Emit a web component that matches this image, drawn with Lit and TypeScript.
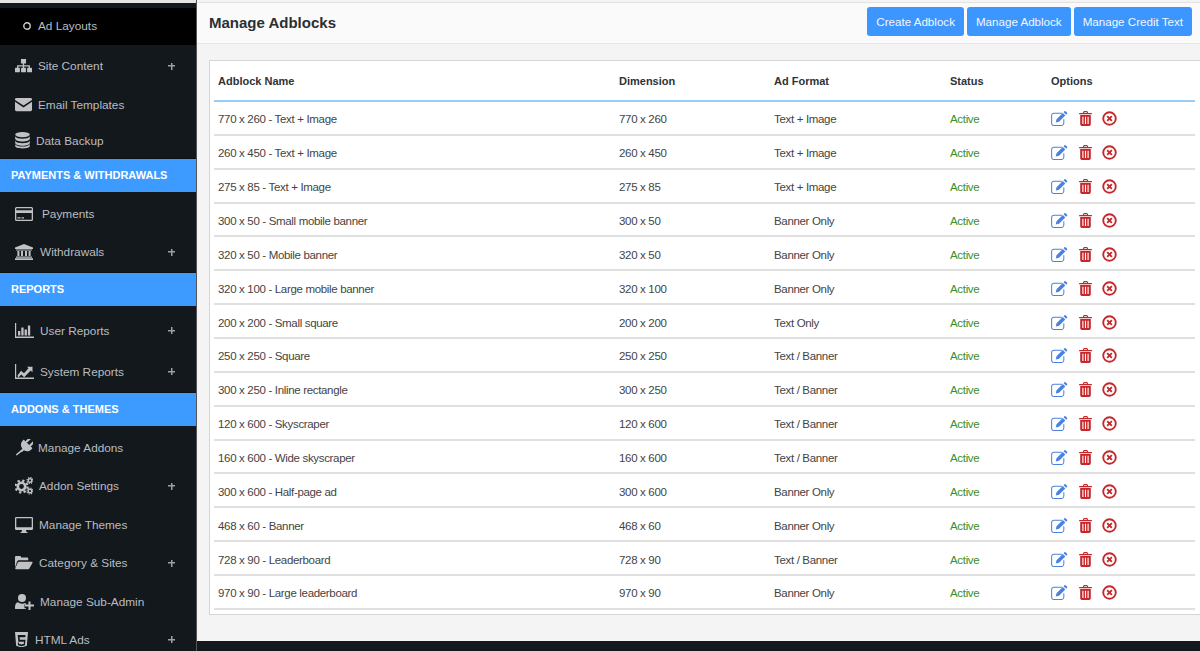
import { LitElement, html, css, svg } from 'lit';
import { customElement } from 'lit/decorators.js';

const icons: Record<string, any> = {
  sitemap: svg`<path d="M6.300 0h5.400v4.800H6.300zM8.300 4.800h1.400v1.700H15.800v3h-1.400V7.900H9.700v1.600H8.300V7.900H3.600v1.600H2.200v-3h6.100z"/><rect x="0" y="9.300" width="5.200" height="4.700" rx=".6"/><rect x="6.400" y="9.300" width="5.200" height="4.700" rx=".6"/><rect x="12.800" y="9.300" width="5.200" height="4.700" rx=".6"/>`,
  envelope: svg`<path d="M1.500 0h15A1.500 1.500 0 0 1 18 1.500v.6L9 8 0 2.100v-.6A1.500 1.500 0 0 1 1.500 0z"/><path d="M0 4l9 6 9-6v8.500a1.500 1.500 0 0 1-1.500 1.500h-15A1.500 1.500 0 0 1 0 12.500z"/>`,
  database: svg`<ellipse cx="7.500" cy="2.600" rx="7.300" ry="2.600"/><path d="M.2 4.200c1 1.800 3.800 2.500 7.300 2.500s6.300-.7 7.300-2.500v2.600c0 1.500-3.300 2.700-7.300 2.700S.2 8.300.2 6.800z"/><path d="M.2 8.700c1 1.800 3.800 2.500 7.300 2.500s6.300-.7 7.300-2.500v2.400c0 1.500-3.300 2.700-7.300 2.700S.2 12.600.2 11.100z"/><path d="M.2 12.700c1 1.500 3.800 2.300 7.300 2.300s6.300-.8 7.300-2.300v1.900c0 1.500-3.300 2.400-7.300 2.400S.2 16.100.2 14.600z" transform="translate(0 -.5)"/>`,
  card: svg`<path fill-rule="evenodd" d="M1.500 0h15A1.500 1.500 0 0 1 18 1.500v11a1.500 1.500 0 0 1-1.500 1.500h-15A1.500 1.500 0 0 1 0 12.500v-11A1.500 1.500 0 0 1 1.500 0zM1.300 1.300v2h15.400v-2zM1.300 6v6.700h15.400V6zM2.500 10.200h3v1.300h-3zM6.500 10.200h2.500v1.300H6.500z"/>`,
  bank: svg`<path d="M9 0l9 3.600V5H0V3.600z"/><path d="M1 5.500h16v1H1zM2.400 7h2v5h-2zM6 7h2v5H6zM10 7h2v5h-2zM13.600 7h2v5h-2zM1 12.500h16v1.200H1zM0 14.300h18V16H0z"/>`,
  bars: svg`<path d="M0 0h1.200v13.600H19V15H0z"/><path d="M3 8h2.300v4.600H3zM6.300 4.500h2.300v8.100H6.300zM9.600 6.500h2.300v6.100H9.600zM12.900 2.500h2.300v10.100h-2.300z"/>`,
  line: svg`<path d="M0 0h1.200v13.600H19V15H0z"/><path d="M2.500 11.500l3.500-4.800 3 2.500 4.500-5L12 2.800h5.500v5.400l-1.800-1.800-6.500 6.800-3-2.800-2.900 3.400z"/>`,
  plug: svg`<g transform="rotate(45 9 9)"><rect x="5.200" y="-2.500" width="2.300" height="6" rx="1"/><rect x="10.500" y="-2.500" width="2.300" height="6" rx="1"/><path d="M3.400 3.200h11.200c.4 0 .6.300.6.600v1c0 3.200-2 5.400-4.700 5.800v2.200c0 .5-.3.800-.7.900l-.6 5.800H7.800l.5-5.800V10.600C5.200 10.200 2.800 8 2.800 4.800v-1c0-.3.200-.6.600-.6z"/></g>`,
  cogs: svg`<circle cx="6.500" cy="9.500" r="3.700" fill="none" stroke="currentColor" stroke-width="2.600"/><circle cx="6.500" cy="9.500" r="6" fill="none" stroke="currentColor" stroke-width="2.200" stroke-dasharray="2.300 2.400"/><circle cx="15" cy="3.500" r="1.800" fill="none" stroke="currentColor" stroke-width="1.400"/><circle cx="15" cy="3.500" r="3" fill="none" stroke="currentColor" stroke-width="1.200" stroke-dasharray="1.300 1.050"/><circle cx="15" cy="14" r="1.800" fill="none" stroke="currentColor" stroke-width="1.400"/><circle cx="15" cy="14" r="3" fill="none" stroke="currentColor" stroke-width="1.200" stroke-dasharray="1.300 1.050"/>`,
  desktop: svg`<path fill-rule="evenodd" d="M1.300 0h15.400A1.300 1.300 0 0 1 18 1.300v10.400a1.300 1.300 0 0 1-1.300 1.300H11l.4 2h1.100v1h-7v-1h1.100l.4-2H1.300A1.300 1.300 0 0 1 0 11.700V1.300A1.300 1.300 0 0 1 1.300 0zM1.300 1.300v9h15.400v-9z"/>`,
  folder: svg`<path d="M0 12.500V1.300C0 .6.600 0 1.300 0h3.800c.7 0 1.300.6 1.300 1.300v.4h6.300c.7 0 1.300.6 1.300 1.300V4.500H4.500c-1 0-1.800.5-2.300 1.300z"/><path d="M4.500 6h13c.8 0 1.300.6.900 1.300l-3.300 5.800c-.3.6-1 .9-1.700.9H1.200c-.8 0-1.200-.6-.8-1.300l2.400-5.700C3.100 6.400 3.800 6 4.500 6z"/>`,
  userplus: svg`<circle cx="7" cy="4" r="4"/><path d="M0 14.500c0-3.500.8-6 3-6.200C4 9.200 5.400 9.700 7 9.700c1.200 0 2.300-.3 3.200-.8.600.4 1.100.9 1.400 1.500H9.500v3.800h1.500V15H1.200C.5 15 0 14.900 0 14.500z"/><path d="M13.500 8.500h2V11.500H19v2h-3.500V17h-2v-3.500H10v-2h3.500z" transform="translate(0 -1)"/>`,
  html5: svg`<path fill-rule="evenodd" d="M0 0h12.500l-1.100 13.200L6.200 15 1.100 13.200zM2.600 3l.6 6.400h5.500l-.2 2-2.300.7-2.300-.7-.1-1.300H2.700l.2 2.700 3.300 1 3.300-1 .6-5.400H4.600l-.2-2.300h5.500l.2-2.100z"/>`,
  edit: svg`<path d="M13 9.500v4A2.500 2.500 0 0 1 10.500 16h-8A2.500 2.500 0 0 1 0 13.500v-8A2.500 2.500 0 0 1 2.500 3h8.500" transform="translate(.6 -.6)" fill="none" stroke="currentColor" stroke-width="1.100"/><path d="M5.800 8.700l6.700-6.700 2.700 2.700-6.700 6.700-3.500.8zM13.300 1.200l1-1c.3-.3.8-.3 1.100 0l1.700 1.700c.3.300.3.800 0 1.100l-1 1z"/>`,
  trash: svg`<path fill-rule="evenodd" d="M4 2l.6-1.400C4.800.2 5.200 0 5.600 0h2.800c.4 0 .8.200 1 .6L10 2h3.300c.4 0 .7.300.7.700v.6H0v-.6C0 2.300.3 2 .7 2zM5.300 2h3.400l-.4-.8H5.700zM1.300 4.200h11.400v10.100c0 .9-.6 1.700-1.500 1.700H2.800c-.9 0-1.500-.8-1.500-1.700zM3.600 6v8h1.200V6zM6.400 6v8h1.200V6zM9.200 6v8h1.200V6z"/>`,
  times: svg`<circle cx="8" cy="8" r="6.700" fill="none" stroke="currentColor" stroke-width="2"/><path d="M4.800 6.200l1.400-1.400L8 6.600l1.800-1.800 1.400 1.400L9.400 8l1.800 1.800-1.400 1.400L8 9.400l-1.800 1.800-1.400-1.400L6.600 8z"/>`,
};

// vb = viewBox of the drawing, w = drawn width, gap = space before the label, pb = bottom padding
type Item = { kind: 'item'; label: string; icon: string; vb: string; w: number; gap: number; h: number; pb?: number; plus?: boolean };
type Section = { kind: 'section'; label: string };

const nav: (Item | Section)[] = [
  { kind: 'item', label: 'Site Content', icon: 'sitemap', vb: '0 0 18 14', w: 17, gap: 6, h: 42, plus: true },
  { kind: 'item', label: 'Email Templates', icon: 'envelope', vb: '0 0 18 14', w: 17, gap: 6, h: 36 },
  { kind: 'item', label: 'Data Backup', icon: 'database', vb: '0 0 15 17', w: 15, gap: 6, h: 35 },
  { kind: 'section', label: 'PAYMENTS & WITHDRAWALS' },
  { kind: 'item', label: 'Payments', icon: 'card', vb: '0 0 18 14', w: 18, gap: 9, h: 44 },
  { kind: 'item', label: 'Withdrawals', icon: 'bank', vb: '0 0 18 16', w: 18, gap: 7, h: 36, pb: 4, plus: true },
  { kind: 'section', label: 'REPORTS' },
  { kind: 'item', label: 'User Reports', icon: 'bars', vb: '0 0 19 15', w: 19, gap: 6, h: 49, plus: true },
  { kind: 'item', label: 'System Reports', icon: 'line', vb: '0 0 19 15', w: 19, gap: 6, h: 37, pb: 4, plus: true },
  { kind: 'section', label: 'ADDONS & THEMES' },
  { kind: 'item', label: 'Manage Addons', icon: 'plug', vb: '0 0 18 18', w: 18, gap: 5, h: 44 },
  { kind: 'item', label: 'Addon Settings', icon: 'cogs', vb: '0 0 18 18', w: 18, gap: 6, h: 32, plus: true },
  { kind: 'item', label: 'Manage Themes', icon: 'desktop', vb: '0 0 18 16', w: 18, gap: 6, h: 45 },
  { kind: 'item', label: 'Category & Sites', icon: 'folder', vb: '0 0 19 14', w: 18, gap: 6, h: 32, plus: true },
  { kind: 'item', label: 'Manage Sub-Admin', icon: 'userplus', vb: '0 0 19 16', w: 19, gap: 6, h: 45 },
  { kind: 'item', label: 'HTML Ads', icon: 'html5', vb: '0 0 12.500 15', w: 13, gap: 7, h: 31, plus: true },
];

const rows = [
  ['770 x 260 - Text + Image', '770 x 260', 'Text + Image'],
  ['260 x 450 - Text + Image', '260 x 450', 'Text + Image'],
  ['275 x 85 - Text + Image', '275 x 85', 'Text + Image'],
  ['300 x 50 - Small mobile banner', '300 x 50', 'Banner Only'],
  ['320 x 50 - Mobile banner', '320 x 50', 'Banner Only'],
  ['320 x 100 - Large mobile banner', '320 x 100', 'Banner Only'],
  ['200 x 200 - Small square', '200 x 200', 'Text Only'],
  ['250 x 250 - Square', '250 x 250', 'Text / Banner'],
  ['300 x 250 - Inline rectangle', '300 x 250', 'Text / Banner'],
  ['120 x 600 - Skyscraper', '120 x 600', 'Text / Banner'],
  ['160 x 600 - Wide skyscraper', '160 x 600', 'Text / Banner'],
  ['300 x 600 - Half-page ad', '300 x 600', 'Banner Only'],
  ['468 x 60 - Banner', '468 x 60', 'Banner Only'],
  ['728 x 90 - Leaderboard', '728 x 90', 'Text / Banner'],
  ['970 x 90 - Large leaderboard', '970 x 90', 'Banner Only'],
];

@customElement('app-root')
export class AppRoot extends LitElement {
  static styles = css`
    :host {
      display: grid;
      grid-template-columns: 197px 1fr;
      height: 651px;
      overflow: hidden;
      font-family: 'Liberation Sans', Arial, sans-serif;
      background: #f4f4f4;
    }

    .sidebar {
      background: #13181d;
      border-right: 1px solid #555;
      box-sizing: border-box;
      color: #b9bdc1;
      font-size: 11.800px;
      height: 651px;
      overflow: hidden;
      padding-top: 3px;
      box-shadow: inset 0 3px 0 #e4e4e4;
    }

    .sub {
      background: #000;
      margin-top: 5px;
      height: 37px;
      display: flex;
      align-items: center;
      padding: 0 0 1px 23px;
      box-sizing: border-box;
      gap: 7px;
    }

    .item {
      display: flex;
      align-items: center;
      box-sizing: border-box;
      padding-left: 15px;
    }

    .item svg {
      fill: currentColor;
      flex: none;
      color: #c0c2c4;
    }

    .label {
      flex: 1;
    }

    .plus {
      width: 7px;
      height: 7px;
      margin-right: 21px;
      background:
        linear-gradient(#9aa0a6, #9aa0a6) center / 7px 1.500px no-repeat,
        linear-gradient(#9aa0a6, #9aa0a6) center / 1.500px 7px no-repeat;
    }

    .section {
      background: #3d9bff;
      color: #fff;
      font-weight: 700;
      font-size: 11px;
      display: flex;
      align-items: center;
      box-sizing: border-box;
      height: 34px;
      padding: 0 0 2px 11px;
      border-top: 1px solid #0d1114;
    }

    .main {
      display: flex;
      flex-direction: column;
      min-width: 0;
      height: 651px;
    }

    .head {
      margin-top: 2px;
      border-top: 1px solid #e2e2e2;
      border-bottom: 1px solid #e6e6e6;
      background: #fafafa;
      height: 40px;
      box-sizing: content-box;
      display: flex;
      align-items: center;
      justify-content: space-between;
      padding: 0 8px 0 12px;
    }

    h1 {
      margin: -2px 0 0;
      font-size: 15px;
      font-weight: 700;
      color: #2b2f33;
    }

    .btns {
      display: flex;
      gap: 3px;
      margin-top: -3px;
    }

    button {
      font: inherit;
      font-size: 11.600px;
      color: #f2f7ff;
      background: #3c96fd;
      border: 0;
      border-radius: 3px;
      height: 29px;
      padding: 0 9px 1px;
    }

    .body {
      flex: 1;
      padding: 16px 0 0 12px;
      min-height: 0;
    }

    .card {
      background: #fff;
      border: 1px solid #d6d6d6;
      border-right: 0;
      height: 555px;
      box-sizing: border-box;
      padding: 0 5px 0 4px;
    }

    table {
      width: 100%;
      table-layout: fixed;
      border-collapse: separate;
      border-spacing: 0;
      font-size: 11.500px;
      letter-spacing: -0.33px;
      color: #444;
    }

    th {
      text-align: left;
      font-weight: 700;
      font-size: 11px;
      letter-spacing: 0;
      color: #2f3338;
      height: 41px;
      padding: 0 4px;
      border-bottom: 2px solid #9accf8;
      box-sizing: border-box;
    }

    td {
      height: 33.870px;
      padding: 3px 4px 0;
      box-sizing: border-box;
      border-bottom: 2px solid #e0e0e0;
    }

    .active {
      color: #3a8f2c;
    }

    .opts {
      display: flex;
      align-items: center;
      margin-top: -1px;
    }

    .opts svg {
      fill: currentColor;
      flex: none;
    }

    .e { color: #4a82e0; margin-right: 11px; }
    .t { color: #c4282b; margin-right: 10px; }
    .x { color: #c4282b; }

    .foot {
      height: 10px;
      background: #13181d;
      flex: none;
    }
  `;

  private renderNav(n: Item | Section) {
    if (n.kind === 'section') {
      return html`<div class="section">${n.label}</div>`;
    }
    const [, , vw, vh] = n.vb.split(' ').map(Number);
    return html`<div class="item" style="height:${n.h}px;padding-bottom:${n.pb ?? 0}px">
      <svg viewBox=${n.vb} width=${n.w} height=${(n.w * vh) / vw} style="margin-right:${n.gap}px">${icons[n.icon]}</svg>
      <span class="label">${n.label}</span>
      ${n.plus ? html`<span class="plus"></span>` : ''}
    </div>`;
  }

  render() {
    return html`
      <aside class="sidebar">
        <div class="sub">
          <svg viewBox="0 0 8 8" width="8" height="8"><circle cx="4" cy="4" r="3.200" fill="none" stroke="#c8ccd0" stroke-width="1.400" /></svg>
          Ad Layouts
        </div>
        ${nav.map((n) => this.renderNav(n))}
      </aside>
      <main class="main">
        <header class="head">
          <h1>Manage Adblocks</h1>
          <div class="btns">
            <button>Create Adblock</button>
            <button>Manage Adblock</button>
            <button>Manage Credit Text</button>
          </div>
        </header>
        <div class="body">
          <div class="card">
            <table>
              <colgroup>
                <col style="width:401px" /><col style="width:155px" /><col style="width:176px" /><col style="width:101px" /><col />
              </colgroup>
              <thead>
                <tr><th>Adblock Name</th><th>Dimension</th><th>Ad Format</th><th>Status</th><th>Options</th></tr>
              </thead>
              <tbody>
                ${rows.map(
                  (r) => html`<tr>
                    <td>${r[0]}</td>
                    <td>${r[1]}</td>
                    <td>${r[2]}</td>
                    <td class="active">Active</td>
                    <td>
                      <div class="opts">
                        <svg class="e" viewBox="0 0 18 16" width="17" height="15">${icons.edit}</svg>
                        <svg class="t" viewBox="0 0 14 16" width="13" height="15">${icons.trash}</svg>
                        <svg class="x" viewBox="0 0 16 16" width="15" height="15">${icons.times}</svg>
                      </div>
                    </td>
                  </tr>`
                )}
              </tbody>
            </table>
          </div>
        </div>
        <div class="foot"></div>
      </main>
    `;
  }
}
